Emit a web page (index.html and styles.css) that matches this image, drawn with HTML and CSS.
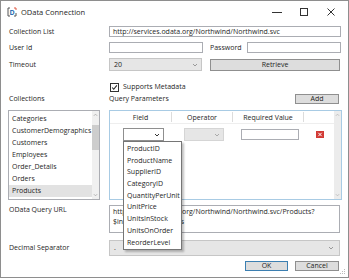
FILE: index.html
```html
<!DOCTYPE html>
<html lang="en">
<head>
  <meta charset="UTF-8" />
  <title>OData Connection</title>
  <link rel="stylesheet" href="styles.css">
</head>
<body>
  <div class="window">
    <div class="titlebar">
      <svg class="app-icon" viewBox="0 0 10 10">
        <path d="M3 1H1V9H3M7 9H9V6" fill="none" stroke="#555" stroke-width="1"/>
        <path d="M7 1H9V3" fill="none" stroke="#e0543f" stroke-width="1"/>
        <text x="5" y="7.6" font-size="7" font-family="Open Sans" font-weight="bold" fill="#2f6fb1" text-anchor="middle">D</text>
      </svg>
      <span class="title">OData Connection</span>
      <div class="caps">
        <span class="cap"><svg width="10" height="10"><path d="M0 5.5H10" stroke="#333"/></svg></span>
        <span class="cap"><svg width="10" height="10"><rect x="1.5" y="1.5" width="7" height="7" fill="none" stroke="#333"/></svg></span>
        <span class="cap"><svg width="10" height="10"><path d="M1.5 1.5L8.5 8.5M8.5 1.5L1.5 8.5" stroke="#333"/></svg></span>
      </div>
    </div>

    <div class="content">
      <div class="row r-collection">
        <div class="label">Collection List</div>
        <div class="textbox grow">http://services.odata.org/Northwind/Northwind.svc</div>
      </div>

      <div class="row r-user">
        <div class="label">User Id</div>
        <div class="textbox user-box"></div>
        <div class="pwd-label">Password</div>
        <div class="textbox grow"></div>
      </div>

      <div class="row r-timeout">
        <div class="label">Timeout</div>
        <div class="combo timeout-combo"><span>20</span><svg class="chev" viewBox="0 0 6 4"><path d="M1 1L3 3L5 1" fill="none" stroke="#999"/></svg></div>
        <div class="button retrieve">Retrieve</div>
      </div>

      <div class="row r-check">
        <div class="label"></div>
        <div class="checkbox"><svg viewBox="0 0 9 9"><path d="M1.5 4.5L3.5 6.8L7.5 1.8" fill="none" stroke="#222" stroke-width="1.3"/></svg></div>
        <span>Supports Metadata</span>
      </div>

      <div class="row r-heads">
        <div class="label">Collections</div>
        <div class="grow">Query Parameters</div>
        <div class="button add">Add</div>
      </div>

      <div class="row r-lists">
        <div class="listbox">
          <div class="items">
            <div class="item">Categories</div>
            <div class="item">CustomerDemographics</div>
            <div class="item">Customers</div>
            <div class="item">Employees</div>
            <div class="item">Order_Details</div>
            <div class="item">Orders</div>
            <div class="item selected">Products</div>
          </div>
          <div class="vscroll">
            <svg class="arrow" viewBox="0 0 6 4"><path d="M1 3L3 1L5 3" fill="none" stroke="#aaa"/></svg>
            <div class="track"><div class="thumb"></div></div>
            <svg class="arrow" viewBox="0 0 6 4"><path d="M1 1L3 3L5 1" fill="none" stroke="#aaa"/></svg>
          </div>
        </div>

        <div class="grid">
          <div class="grid-body">
            <div class="grid-head">
              <div class="col c-field">Field</div>
              <div class="col c-op">Operator</div>
              <div class="col c-val">Required Value</div>
              <div class="col c-rest"></div>
            </div>
            <div class="grid-row">
              <div class="col c-field">
                <div class="field-wrap">
                  <div class="combo open"><span></span><svg class="chev" viewBox="0 0 6 4"><path d="M1 1L3 3L5 1" fill="none" stroke="#333"/></svg></div>
                  <div class="popup">
                    <div class="opt">ProductID</div>
                    <div class="opt">ProductName</div>
                    <div class="opt">SupplierID</div>
                    <div class="opt">CategoryID</div>
                    <div class="opt">QuantityPerUnit</div>
                    <div class="opt">UnitPrice</div>
                    <div class="opt">UnitsInStock</div>
                    <div class="opt">UnitsOnOrder</div>
                    <div class="opt">ReorderLevel</div>
                  </div>
                </div>
              </div>
              <div class="col c-op">
                <div class="combo op-combo"><span></span><svg class="chev" viewBox="0 0 6 4"><path d="M1 1L3 3L5 1" fill="none" stroke="#aaa"/></svg></div>
              </div>
              <div class="col c-val"><div class="textbox val-box"></div></div>
              <div class="col c-rest">
                <svg class="del" viewBox="0 0 8 7"><rect width="8" height="7" fill="#d23a35"/><path d="M2.3 1.8L5.7 5.2M5.7 1.8L2.3 5.2" stroke="#fff" stroke-width="1"/></svg>
              </div>
            </div>
          </div>
          <div class="vscroll grid-scroll">
            <svg class="arrow" viewBox="0 0 6 4"><path d="M1 3L3 1L5 3" fill="none" stroke="#bbb"/></svg>
            <div class="track"></div>
            <svg class="arrow" viewBox="0 0 6 4"><path d="M1 1L3 3L5 1" fill="none" stroke="#bbb"/></svg>
          </div>
        </div>
      </div>

      <div class="row r-url">
        <div class="label">OData Query URL</div>
        <div class="textbox multiline grow">http://services.odata.org/Northwind/Northwind.svc/Products?<br>$inlinecount=allpages</div>
      </div>

      <div class="row r-decimal">
        <div class="label">Decimal Separator</div>
        <div class="combo grow"><span>.</span><svg class="chev" viewBox="0 0 6 4"><path d="M1 1L3 3L5 1" fill="none" stroke="#999"/></svg></div>
      </div>

      <div class="row r-buttons">
        <div class="button ok">OK</div>
        <div class="button cancel">Cancel</div>
      </div>
    </div>

    <svg class="grip" viewBox="0 0 6 6">
      <rect x="4" y="0" width="1" height="1" fill="#bbb"/>
      <rect x="2" y="2" width="1" height="1" fill="#bbb"/>
      <rect x="4" y="2" width="1" height="1" fill="#bbb"/>
      <rect x="0" y="4" width="1" height="1" fill="#bbb"/>
      <rect x="2" y="4" width="1" height="1" fill="#bbb"/>
      <rect x="4" y="4" width="1" height="1" fill="#bbb"/>
    </svg>
  </div>
</body>
</html>
```

FILE: styles.css
```css
* {
  box-sizing: border-box;
}
body {
  margin: 0;
  font-family: 'Open Sans', 'Noto Sans', sans-serif;
  font-size: 7px;
  color: #1e1e1e;
  background: white;
}
.window {
  position: relative;
  width: 349px;
  height: 278px;
  border: 1px solid #8e8e8e;
  background: white;
}
.titlebar {
  height: 21px;
  display: flex;
  align-items: center;
  padding-left: 6px;
}
.app-icon {
  width: 10px;
  height: 10px;
  margin-right: 4px;
}
.title {
  flex: 1;
  font-size: 7.5px;
}
.caps {
  display: flex;
  height: 100%;
  margin-right: 4px;
}
.cap {
  width: 27px;
  display: flex;
  align-items: center;
  justify-content: center;
}
.content {
  padding: 0 7px 0 8px;
}
.row {
  display: flex;
  align-items: center;
  line-height: 10px;
}
.label {
  width: 100px;
  flex: none;
}
.grow {
  flex: 1;
}
.textbox {
  height: 11px;
  border: 1px solid #abadb3;
  background: white;
  padding: 0 3px;
  line-height: 9px;
  white-space: nowrap;
  overflow: hidden;
}
.combo {
  display: flex;
  align-items: center;
  justify-content: space-between;
  background: #e6e6e6;
  border: 1px solid #c6c6c6;
  padding: 0 3px 0 4px;
}
.chev {
  width: 6px;
  height: 4px;
}
.button {
  background: #dddddd;
  border: 1px solid #8f8f8f;
  text-align: center;
  line-height: 8px;
}

.r-collection {
  margin-top: 4px;
  height: 11px;
}
.r-user {
  margin-top: 5px;
  height: 11px;
}
.user-box {
  width: 94px;
}
.pwd-label {
  width: 37px;
  margin-left: 7px;
}
.r-timeout {
  margin-top: 5px;
  height: 13px;
}
.timeout-combo {
  width: 93px;
  height: 13px;
}
.retrieve {
  flex: 1;
  margin-left: 8px;
  height: 12px;
  line-height: 10px;
  margin-right: 1px;
}
.r-check {
  margin-top: 11px;
  height: 10px;
}
.checkbox {
  width: 9px;
  height: 9px;
  margin-left: 1px;
  margin-right: 4px;
  border: 1px solid #333;
  background: white;
  display: flex;
}
.checkbox svg {
  width: 7px;
  height: 7px;
}
.r-heads {
  margin-top: 2px;
  height: 10px;
}
.add {
  width: 44px;
  height: 10px;
  margin-right: 2px;
}

.r-lists {
  margin-top: 6px;
  height: 90px;
  align-items: stretch;
}
.listbox {
  width: 92px;
  margin-left: -1px;
  margin-right: 9px;
  border: 1px solid #abadb3;
  display: flex;
}
.items {
  flex: 1;
  padding-top: 2px;
}
.item {
  height: 12px;
  line-height: 12px;
  padding-left: 3px;
}
.item.selected {
  background: #e2e2e2;
}
.vscroll {
  width: 7px;
  background: #f0f0f0;
  display: flex;
  flex-direction: column;
  align-items: center;
}
.vscroll .arrow {
  width: 5px;
  height: 4px;
  margin: 2px 0;
}
.track {
  flex: 1;
  width: 100%;
}
.thumb {
  margin-top: 6px;
  height: 25px;
  background: #cdcdcd;
}
.grid {
  flex: 1;
  display: flex;
  border: 1px solid #a8cbe4;
  margin-right: -1px;
}
.grid-body {
  flex: 1;
}
.grid-head {
  display: flex;
  height: 13px;
  line-height: 12px;
  border-bottom: 1px solid #eeeeee;
}
.grid-head .col {
  text-align: center;
  border-right: 1px solid #dcdcdc;
  margin: 1px 0 1px;
}
.grid-head .c-rest {
  border-right: none;
}
.c-field {
  width: 62px;
}
.c-op {
  width: 61px;
}
.c-val {
  width: 71px;
}
.c-rest {
  flex: 1;
}
.grid-row {
  display: flex;
  margin-top: 4px;
  height: 13px;
}
.grid-row .col {
  display: flex;
  align-items: center;
}
.field-wrap {
  position: relative;
  margin-left: 13px;
}
.combo.open {
  width: 41px;
  height: 13px;
  background: white;
  border-color: #8f8f8f;
}
.popup {
  position: absolute;
  top: 13px;
  left: 0;
  width: 59px;
  padding: 1px 0;
  background: white;
  border: 1px solid #767676;
  box-shadow: 2px 2px 2px rgba(0,0,0,0.25);
  z-index: 2;
}
.opt {
  height: 11.7px;
  line-height: 11.7px;
  padding-left: 3px;
  white-space: nowrap;
}
.op-combo {
  margin-left: 12px;
  width: 40px;
  height: 13px;
  border-color: #d5d5d5;
}
.val-box {
  margin-left: 8px;
  width: 58px;
}
.del {
  width: 8px;
  height: 7px;
  margin-left: 12px;
}
.grid-scroll {
  background: #ececec;
}

.r-url {
  margin-top: 5px;
  height: 28px;
  align-items: flex-start;
}
.r-url .label {
  padding-top: 0;
}
.multiline {
  height: 28px;
  padding-top: 1px;
  line-height: 9.5px;
  margin-right: 1px;
}
.r-decimal {
  margin-top: 7px;
  height: 16px;
}
.r-decimal .combo {
  height: 16px;
  margin-right: 1px;
  padding-right: 5px;
}
.r-buttons {
  margin-top: 5px;
  height: 10px;
  justify-content: flex-end;
}
.ok {
  width: 43px;
  height: 10px;
  border-color: #3c7fb1;
}
.cancel {
  width: 44px;
  height: 10px;
  margin-left: 7px;
  margin-right: 2px;
}
.grip {
  position: absolute;
  right: 2px;
  bottom: 2px;
  width: 6px;
  height: 6px;
}
```
